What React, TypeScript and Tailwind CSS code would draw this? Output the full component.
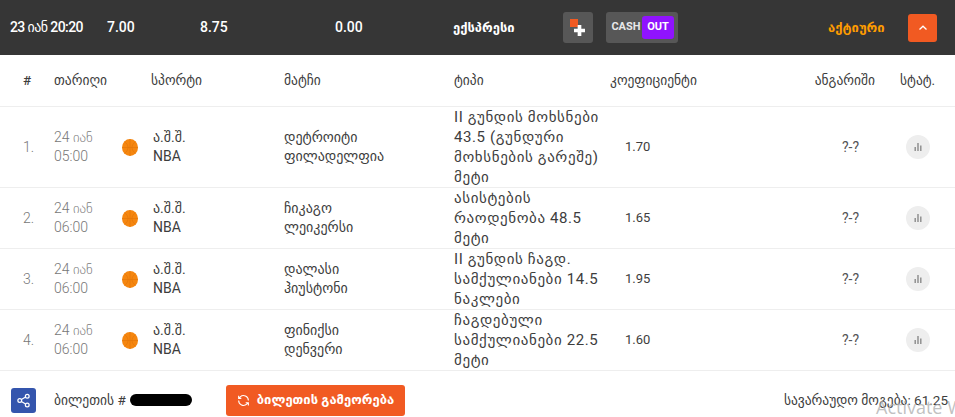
const grid = "grid grid-cols-[54px_68px_31px_131px_170px_156px_1fr_70px]";

function Ball() {
  return (
    <svg width="16" height="17" viewBox="0 0 16 17" className="block">
      <ellipse cx="8" cy="8.5" rx="8" ry="8.5" fill="#f5860f" />
      <g stroke="#e07408" strokeWidth="0.6" fill="none">
        <path d="M8 0v17M0 8.5h16M2.5 2.5c2.5 2 3.5 4 3.5 6s-1 4-3.5 6M13.5 2.5c-2.5 2-3.5 4-3.5 6s1 4 3.5 6" />
      </g>
    </svg>
  );
}

function Row({ n, date, time, a, b, type, odd, h }: { n: number; date: string; time: string; a: string; b: string; type: string[]; odd: string; h: string }) {
  return (
    <div className={`${grid} ${h} items-center border-b border-[#eeeeee] text-[14px] leading-[20px]`}>
      <div className="pl-[23px] font-light text-[#777777]">{n}.</div>
      <div className="-mt-[1px] font-light text-[#777777] leading-[19px]"><div>{date}</div><div>{time}</div></div>
      <div><Ball /></div>
      <div className="text-[#3d3d3d] leading-[19px]"><div>ა.შ.შ.</div><div>NBA</div></div>
      <div className="text-[#3d3d3d] leading-[19px]"><div>{a}</div><div>{b}</div></div>
      <div className="-mt-[1px] text-[15px] tracking-[0.6px] text-[#3d3d3d]">{type.map((t) => <div key={t} className="whitespace-nowrap">{t}</div>)}</div>
      <div className="flex justify-between text-[13px] text-[#3d3d3d]">
        <span className="pl-[15px]">{odd}</span>
        <span className="pr-[26px] text-[14px] text-[#555555]">?-?</span>
      </div>
      <div className="flex justify-start pl-[21px]">
        <div className="flex h-6 w-6 items-center justify-center rounded-full bg-[#eeeeee]">
          <svg width="10" height="10" viewBox="0 0 10 10"><path d="M1.5 5h1.4v4H1.5zM4.3 1h1.4v8H4.3zM7.1 3.5h1.4V9H7.1z" fill="#8a8a8a" /></svg>
        </div>
      </div>
    </div>
  );
}

export default function App() {
  return (
    <div className="relative h-[417px] w-[955px] overflow-hidden bg-white font-['Roboto','DejaVu_Sans',sans-serif]">
      <div className="flex h-[55px] items-center bg-[#363636] text-[14px] font-medium text-white">
        <span className="ml-[10px] w-[97px] whitespace-nowrap tracking-[-0.6px]">23 იან 20:20</span>
        <span className="w-[93px]">7.00</span>
        <span className="w-[135px]">8.75</span>
        <span className="w-[118px]">0.00</span>
        <span className="w-[110px] text-[13px] font-bold">ექსპრესი</span>
        <div className="relative flex h-[31px] w-[30px] items-center justify-center rounded-[3px] bg-[#575757]">
          <span className="absolute left-[7px] top-[7px] h-[8px] w-[8px] bg-[#f15a22]"></span>
          <svg width="11" height="11" viewBox="0 0 12 12" className="absolute left-[11px] top-[13px]"><path d="M4 0h4v4h4v4H8v4H4V8H0V4h4z" fill="#ffffff" /></svg>
        </div>
        <div className="ml-[13px] flex h-[31px] w-[72px] items-center rounded-[3px] bg-[#575757] pl-[5px] text-[11px] font-bold text-[#e8e8e8]">
          <span className="w-[30px] text-center">CASH</span>
          <span className="ml-[1px] flex h-[23px] w-[32px] items-center justify-center rounded-[3px] bg-[#9013fe] text-white">OUT</span>
        </div>
        <span className="ml-[150px] w-[80px] text-[13px] font-bold text-[#ff9c00]">აქტიური</span>
        <button className="flex h-[28px] w-[29px] items-center justify-center rounded-[3px] bg-[#f15a22]">
          <svg width="12" height="12" viewBox="0 0 12 12"><path d="M2.5 7.5 6 4.2l3.5 3.3" stroke="#ffffff" strokeWidth="1.3" fill="none" /></svg>
        </button>
      </div>

      <div className={`${grid} h-[52px] items-center border-b border-[#eeeeee] text-[13.5px] text-[#3d3d3d]`}>
        <div className="pl-[23px] font-medium">#</div>
        <div>თარიღი</div>
        <div className="col-span-2 pl-[29px]">სპორტი</div>
        <div>მატჩი</div>
        <div>ტიპი</div>
        <div className="flex justify-between">
          <span className="whitespace-nowrap">კოეფიციენტი</span>
          <span className="pr-[10px]">ანგარიში</span>
        </div>
        <div className="pl-[15px]">სტატ.</div>
      </div>

      <Row n={1} date="24 იან" time="05:00" a="დეტროიტი" b="ფილადელფია" odd="1.70" h="h-[81px]" type={["II გუნდის მოხსნები", "43.5 (გუნდური", "მოხსნების გარეშე)", "მეტი"]} />
      <Row n={2} date="24 იან" time="06:00" a="ჩიკაგო" b="ლეიკერსი" odd="1.65" h="h-[61px]" type={["ასისტების", "რაოდენობა 48.5", "მეტი"]} />
      <Row n={3} date="24 იან" time="06:00" a="დალასი" b="ჰიუსტონი" odd="1.95" h="h-[61px]" type={["II გუნდის ჩაგდ.", "სამქულიანები 14.5", "ნაკლები"]} />
      <Row n={4} date="24 იან" time="06:00" a="ფინიქსი" b="დენვერი" odd="1.60" h="h-[61px]" type={["ჩაგდებული", "სამქულიანები 22.5", "მეტი"]} />

      <div className="flex h-[46px] items-center pt-[12px] text-[13px] text-[#3d3d3d]">
        <div className="ml-[11px] flex h-[25px] w-[25px] items-center justify-center rounded-[3px] bg-[#3455ad]">
          <svg width="15" height="15" viewBox="0 0 24 24" fill="none" stroke="#ffffff" strokeWidth="2"><circle cx="18" cy="5" r="3" /><circle cx="6" cy="12" r="3" /><circle cx="18" cy="19" r="3" /><path d="m8.6 13.5 6.8 4M15.4 6.5l-6.8 4" /></svg>
        </div>
        <span className="ml-[18px] w-[71px] whitespace-nowrap text-[13.5px]">ბილეთის #</span>
        <span className="ml-[5px] h-[12px] w-[62px] rounded-[6px] bg-black"></span>
        <button className="ml-[34px] flex h-[31px] w-[179px] items-center justify-center gap-[7px] rounded-[3px] bg-[#f15a22] text-[13px] font-bold text-white">
          <svg width="13" height="13" viewBox="0 0 24 24" fill="none" stroke="#ffffff" strokeWidth="2"><path d="M21 12a9 9 0 0 0-15-6.7L3 8M3 3v5h5M3 12a9 9 0 0 0 15 6.7l3-2.7M21 21v-5h-5" /></svg>
          ბილეთის გამეორება
        </button>
        <span className="ml-auto pr-[7px] whitespace-nowrap text-[13.5px]">სავარაუდო მოგება: 61.25</span>
      </div>

      <div className="absolute left-[876px] top-[394px] whitespace-nowrap font-['Open_Sans',sans-serif] text-[18px] text-[#b0b0b0]/80">Activate W</div>
    </div>
  );
}
